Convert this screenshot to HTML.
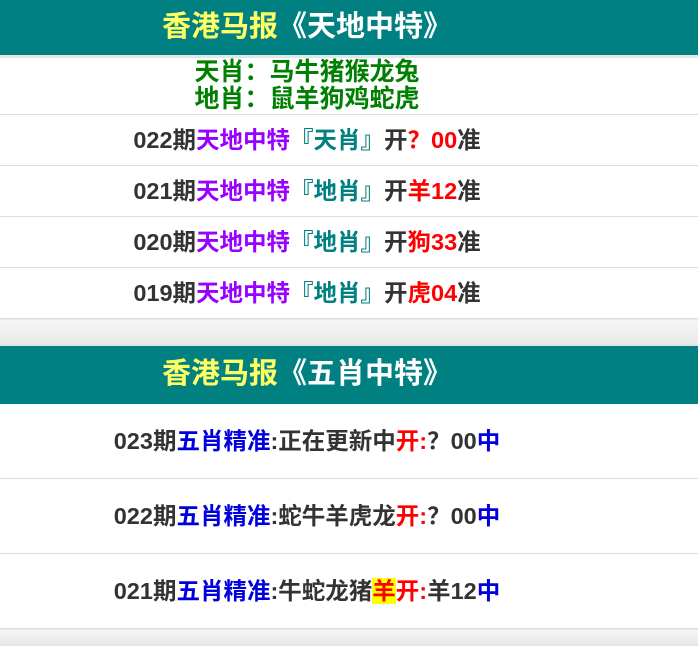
<!DOCTYPE html>
<html><head><meta charset="utf-8"><style>
body{margin:0;background:#fff;font-family:"Liberation Sans","Noto Sans CJK SC",sans-serif;font-weight:bold;width:698px;height:642px;overflow:hidden}
.c{width:614px;text-align:center;white-space:nowrap}
.hd{background:#008080;height:55px;line-height:55px;font-size:29px;color:#fff;border-bottom:3px solid #dfe9e9}
.hd .y{color:#ffff66}
.g{color:#008000;font-size:25px;line-height:27px;padding:1px 0 1px;border-bottom:1px solid #ddd}
.r{height:50px;line-height:50px;font-size:23.5px;color:#333;border-bottom:1px solid #ddd}
.p{color:#9900ff}.t{color:#008080}.red{color:#ff0000}.b{color:#0000dd}
.gap{height:24px;background:linear-gradient(#f6f6f6,#e9e9e9);border-top:1px solid #e8e8e8;border-bottom:2px solid #e5e5e5}
.r2{height:74px;line-height:74px;font-size:23.5px;color:#333;border-bottom:1px solid #ddd}
.hl{background:#ffff00;color:#ff0000}
</style></head><body>
<div class="hd"><div class="c"><span class="y">香港马报</span>《天地中特》</div></div>
<div class="g"><div class="c">天肖：马牛猪猴龙兔<br>地肖：鼠羊狗鸡蛇虎</div></div>
<div class="r"><div class="c">022期<span class="p">天地中特</span><span class="t">『天肖』</span>开<span class="red">？00</span>准</div></div>
<div class="r"><div class="c">021期<span class="p">天地中特</span><span class="t">『地肖』</span>开<span class="red">羊12</span>准</div></div>
<div class="r"><div class="c">020期<span class="p">天地中特</span><span class="t">『地肖』</span>开<span class="red">狗33</span>准</div></div>
<div class="r"><div class="c">019期<span class="p">天地中特</span><span class="t">『地肖』</span>开<span class="red">虎04</span>准</div></div>
<div class="gap"></div>
<div class="hd" style="border-bottom:none;height:58px;line-height:56px"><div class="c"><span class="y">香港马报</span>《五肖中特》</div></div>
<div class="r2"><div class="c">023期<span class="b">五肖精准</span>:正在更新中<span class="red">开:</span>？00<span class="b">中</span></div></div>
<div class="r2"><div class="c">022期<span class="b">五肖精准</span>:蛇牛羊虎龙<span class="red">开:</span>？00<span class="b">中</span></div></div>
<div class="r2"><div class="c">021期<span class="b">五肖精准</span>:牛蛇龙猪<span class="hl">羊</span><span class="red">开:</span>羊12<span class="b">中</span></div></div>
<div class="gap" style="height:14px"></div>
</body></html>
